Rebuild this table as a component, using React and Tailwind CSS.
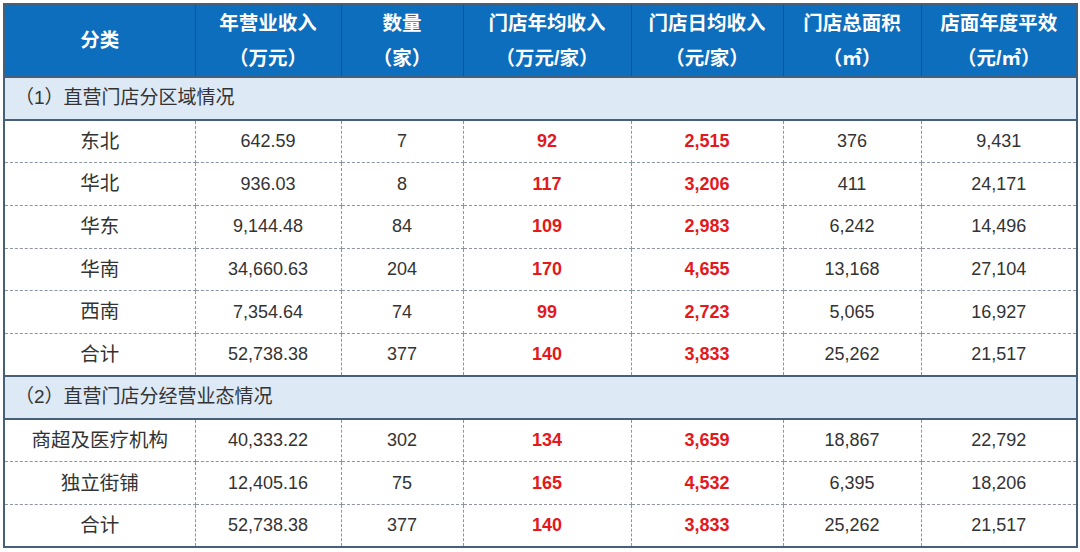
import React from 'react';

const cols = [191, 146, 122, 168, 152, 138, 156];

const headers = [
    ['分类'],
    ['年营业收入', '（万元）'],
    ['数量', '（家）'],
    ['门店年均收入', '（万元/家）'],
    ['门店日均收入', '（元/家）'],
    ['门店总面积', '（㎡）'],
    ['店面年度平效', '（元/㎡）'],
];

const sections = [
    {
        title: '（1）直营门店分区域情况',
        rows: [
            ['东北', '642.59', '7', '92', '2,515', '376', '9,431'],
            ['华北', '936.03', '8', '117', '3,206', '411', '24,171'],
            ['华东', '9,144.48', '84', '109', '2,983', '6,242', '14,496'],
            ['华南', '34,660.63', '204', '170', '4,655', '13,168', '27,104'],
            ['西南', '7,354.64', '74', '99', '2,723', '5,065', '16,927'],
            ['合计', '52,738.38', '377', '140', '3,833', '25,262', '21,517'],
        ],
    },
    {
        title: '（2）直营门店分经营业态情况',
        rows: [
            ['商超及医疗机构', '40,333.22', '302', '134', '3,659', '18,867', '22,792'],
            ['独立街铺', '12,405.16', '75', '165', '4,532', '6,395', '18,206'],
            ['合计', '52,738.38', '377', '140', '3,833', '25,262', '21,517'],
        ],
    },
];

function App() {
    return (
        <div className="w-[1080px] h-[552px] bg-white p-[3px] font-['Liberation_Sans','Noto_Sans_CJK_SC',sans-serif]">
            <table className="w-[1074px] table-fixed border-collapse border-2 border-[#46607a]">
                <colgroup>
                    {cols.map((w, i) => (
                        <col key={i} style={{ width: w }} />
                    ))}
                </colgroup>
                <thead>
                    <tr className="h-[73px] bg-[#0d6ebd]">
                        {headers.map((h, i) => (
                            <th
                                key={i}
                                className="border-x border-[#0a5796] text-white text-[19.5px] font-bold leading-[35px] text-center align-middle"
                            >
                                {h.map((line, j) => (
                                    <div key={j}>{line}</div>
                                ))}
                            </th>
                        ))}
                    </tr>
                </thead>
                <tbody>
                    {sections.map((s, si) => (
                        <React.Fragment key={si}>
                            <tr className="h-[43px] bg-[#dde9f5]">
                                <td
                                    colSpan={7}
                                    className="border-y-2 border-[#46607a] pl-[10px] text-[19px] text-[#333]"
                                >
                                    {s.title}
                                </td>
                            </tr>
                            {s.rows.map((r, ri) => (
                                <tr key={ri} className="h-[42.7px]">
                                    {r.map((c, ci) => (
                                        <td
                                            key={ci}
                                            className={
                                                'border border-dashed border-[#8a96a3] text-center ' +
                                                (ci === 0 ? 'text-[19.5px] ' : 'text-[18px] ') +
                                                (ci === 3 || ci === 4 ? 'text-[#e3191c] font-bold' : 'text-[#333]')
                                            }
                                        >
                                            {c}
                                        </td>
                                    ))}
                                </tr>
                            ))}
                        </React.Fragment>
                    ))}
                </tbody>
            </table>
        </div>
    );
}

export default App;
